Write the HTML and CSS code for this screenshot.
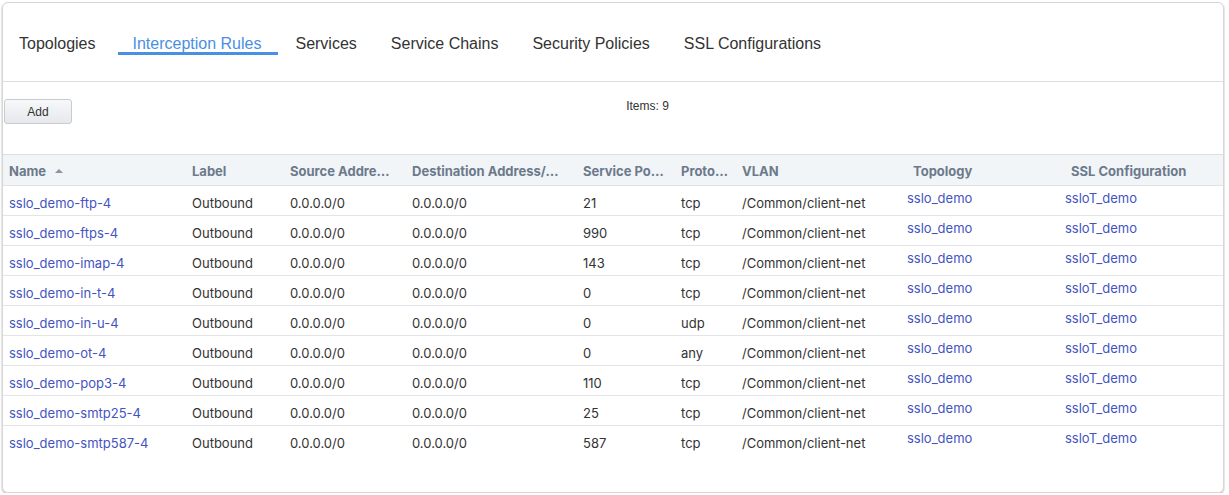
FILE: index.html
```html
<!DOCTYPE html>
<html>
<head>
<meta charset="utf-8">
<link rel="stylesheet" href="styles.css">
</head>
<body>
<div class="card">
  <nav class="tabs">
    <a class="tab">Topologies</a>
    <a class="tab active">Interception Rules</a>
    <a class="tab">Services</a>
    <a class="tab">Service Chains</a>
    <a class="tab">Security Policies</a>
    <a class="tab">SSL Configurations</a>
  </nav>
  <div class="toolbar">
    <button class="btn">Add</button>
    <div class="count">Items: 9</div>
  </div>
  <table class="grid">
    <colgroup>
      <col class="c-name"><col class="c-label"><col class="c-src"><col class="c-dst"><col class="c-port"><col class="c-proto"><col class="c-vlan"><col class="c-topo"><col class="c-ssl">
    </colgroup>
    <thead>
      <tr>
        <th>Name <span class="sort"></span></th>
        <th>Label</th>
        <th>Source Addre…</th>
        <th>Destination Address/…</th>
        <th>Service Po…</th>
        <th>Proto…</th>
        <th>VLAN</th>
        <th class="shift">Topology</th>
        <th class="shift">SSL Configuration</th>
      </tr>
    </thead>
    <tbody>
      <tr><td><a>sslo_demo-ftp-4</a></td><td>Outbound</td><td>0.0.0.0/0</td><td>0.0.0.0/0</td><td>21</td><td>tcp</td><td>/Common/client-net</td><td class="lnk"><a>sslo_demo</a></td><td class="lnk"><a>ssloT_demo</a></td></tr>
      <tr><td><a>sslo_demo-ftps-4</a></td><td>Outbound</td><td>0.0.0.0/0</td><td>0.0.0.0/0</td><td>990</td><td>tcp</td><td>/Common/client-net</td><td class="lnk"><a>sslo_demo</a></td><td class="lnk"><a>ssloT_demo</a></td></tr>
      <tr><td><a>sslo_demo-imap-4</a></td><td>Outbound</td><td>0.0.0.0/0</td><td>0.0.0.0/0</td><td>143</td><td>tcp</td><td>/Common/client-net</td><td class="lnk"><a>sslo_demo</a></td><td class="lnk"><a>ssloT_demo</a></td></tr>
      <tr><td><a>sslo_demo-in-t-4</a></td><td>Outbound</td><td>0.0.0.0/0</td><td>0.0.0.0/0</td><td>0</td><td>tcp</td><td>/Common/client-net</td><td class="lnk"><a>sslo_demo</a></td><td class="lnk"><a>ssloT_demo</a></td></tr>
      <tr><td><a>sslo_demo-in-u-4</a></td><td>Outbound</td><td>0.0.0.0/0</td><td>0.0.0.0/0</td><td>0</td><td>udp</td><td>/Common/client-net</td><td class="lnk"><a>sslo_demo</a></td><td class="lnk"><a>ssloT_demo</a></td></tr>
      <tr><td><a>sslo_demo-ot-4</a></td><td>Outbound</td><td>0.0.0.0/0</td><td>0.0.0.0/0</td><td>0</td><td>any</td><td>/Common/client-net</td><td class="lnk"><a>sslo_demo</a></td><td class="lnk"><a>ssloT_demo</a></td></tr>
      <tr><td><a>sslo_demo-pop3-4</a></td><td>Outbound</td><td>0.0.0.0/0</td><td>0.0.0.0/0</td><td>110</td><td>tcp</td><td>/Common/client-net</td><td class="lnk"><a>sslo_demo</a></td><td class="lnk"><a>ssloT_demo</a></td></tr>
      <tr><td><a>sslo_demo-smtp25-4</a></td><td>Outbound</td><td>0.0.0.0/0</td><td>0.0.0.0/0</td><td>25</td><td>tcp</td><td>/Common/client-net</td><td class="lnk"><a>sslo_demo</a></td><td class="lnk"><a>ssloT_demo</a></td></tr>
      <tr><td><a>sslo_demo-smtp587-4</a></td><td>Outbound</td><td>0.0.0.0/0</td><td>0.0.0.0/0</td><td>587</td><td>tcp</td><td>/Common/client-net</td><td class="lnk"><a>sslo_demo</a></td><td class="lnk"><a>ssloT_demo</a></td></tr>
    </tbody>
  </table>
</div>
</body>
</html>
```
FILE: styles.css
```css
html, body {
  margin: 0;
  padding: 0;
  background: #fff;
}
body {
  font-family: "Liberation Sans", Arial, sans-serif;
  color: #333;
}
.card {
  box-sizing: border-box;
  margin: 2px 0 0 2px;
  width: 1222px;
  height: 491px;
  border: 1px solid #d6d6d6;
  border-radius: 6px;
  box-shadow: 0 1px 2px rgba(0, 0, 0, 0.35);
  overflow: hidden;
}
.tabs {
  display: flex;
  padding: 33px 0 26px 1px;
  border-bottom: 1px solid #dcdde0;
}
.tab {
  display: block;
  padding: 0 15px;
  margin-right: 4px;
  font-size: 16px;
  line-height: 16px;
  color: #333;
  border-bottom: 3px solid transparent;
}
.tab:first-child {
  margin-right: 7px;
}
.tab.active {
  color: #4a90e2;
  border-bottom-color: #4a90e2;
  padding-right: 17px;
  margin-right: 2px;
}
.toolbar {
  display: flex;
  align-items: flex-start;
  height: 72px;
  border-bottom: 1px solid #dcdde0;
}
.btn {
  margin: 17px 0 0 1px;
  width: 68px;
  height: 25px;
  border: 1px solid #c8cbd0;
  border-radius: 3px;
  background: linear-gradient(#f7f8fa, #e6e8ec);
  font-family: "Liberation Sans", Arial, sans-serif;
  font-size: 12px;
  color: #333;
  padding: 0;
}
.count {
  flex: 1;
  text-align: center;
  font-size: 12px;
  line-height: 14px;
  margin-top: 17px;
  color: #333;
}
.grid {
  border-collapse: collapse;
  table-layout: fixed;
  width: 100%;
  font-family: Inter, "Liberation Sans", sans-serif;
  font-size: 13px;
}
.c-name { width: 183px; }
.c-label { width: 98px; }
.c-src { width: 122px; }
.c-dst { width: 171px; }
.c-port { width: 98px; }
.c-proto { width: 61px; }
.c-vlan { width: 165px; }
.c-topo { width: 158px; }
thead th {
  background: #f1f5f8;
  color: #6c7a8b;
  font-weight: 700;
  text-align: left;
  line-height: 28px;
  padding: 2px 0 0 6px;
  white-space: nowrap;
  overflow: hidden;
  border-bottom: 1px solid #dfe2e6;
}
thead th.shift {
  padding-left: 12px;
}
.sort {
  display: inline-block;
  width: 0;
  height: 0;
  margin-left: 6px;
  vertical-align: 3px;
  border-left: 4px solid transparent;
  border-right: 4px solid transparent;
  border-bottom: 4px solid #8795a6;
}
tbody td {
  line-height: 23px;
  padding: 6px 0 0 6px;
  border-bottom: 1px solid #e2e4e7;
  white-space: nowrap;
  overflow: hidden;
  color: #333;
}
tbody tr:last-child td {
  border-bottom: none;
}
tbody td.lnk {
  vertical-align: top;
  line-height: 15px;
  padding-top: 5px;
}
a {
  color: #4354c1;
  text-decoration: none;
}
```
